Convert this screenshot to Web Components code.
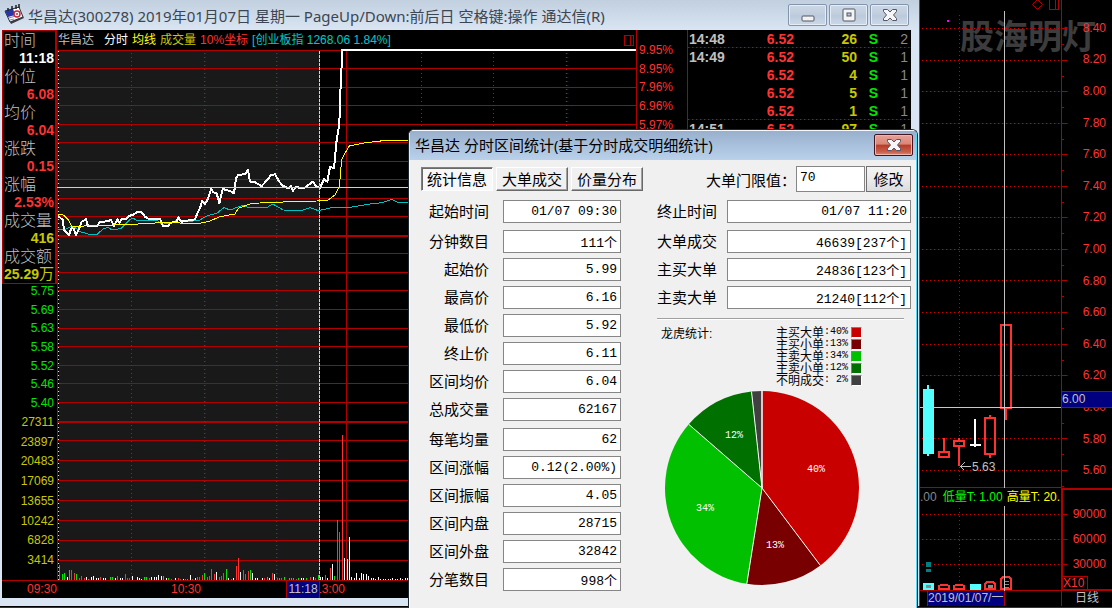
<!DOCTYPE html>
<html lang="zh-CN">
<head>
<meta charset="utf-8">
<title>华昌达 分时走势</title>
<style>
html,body{margin:0;height:100%;background:#000}
body{font-family:"Liberation Sans","Noto Sans CJK SC",sans-serif}
</style>
</head>
<body>
<trade-desk></trade-desk>
<script>
const define = (name, css, html) => {
  customElements.define(name, class extends HTMLElement {
    constructor() {
      super();
      const fill = typeof html === 'function' ? html(this) : html;
      this.attachShadow({mode: 'open'}).innerHTML =
        `<style>*{box-sizing:border-box}:host{display:block;box-sizing:border-box}${css}</style>${fill}`;
    }
  });
};
const RED = '#b00000', HOT = '#ff3232';
const COLORS = {r: '#ff3232', g: '#00e600', w: '#ffffff'};
const hline = (x1, x2, y, extra = '') => `<path d="M${x1} ${y}.5H${x2}" ${extra}/>`;
const vline = (x, y1, y2, extra = '') => `<path d="M${x}.5 ${y1}V${y2}" ${extra}/>`;

/* ---- window caption buttons ---- */
define('caption-button', `
:host{width:39px;height:22px}
button{display:grid;place-items:center;width:100%;height:100%;padding:0;border:1px solid #8494ab;border-radius:2px;
 background:linear-gradient(#ccd8e6,#c0cddd 48%,#bac9db 50%,#cbd8e7);box-shadow:inset 0 0 0 1px #e4ecf5}
:host([kind=danger]) button{border-color:#431422;background:linear-gradient(#e6a298,#d98676 46%,#b83b26 50%,#c9604d 85%,#dc8c7a);box-shadow:inset 0 0 0 1px #eeb6aa}
svg{display:block}`, el => {
  const g = {
    min: ['最小化', '<rect x="1" y="8" width="12" height="5" rx="1" fill="#f2f2f2" stroke="#535666"/>'],
    max: ['最大化', '<rect x="1" y="1" width="12" height="12" rx="1" fill="#f4f4f4" stroke="#535666"/><rect x="5" y="5" width="4" height="3" fill="#b9c8da" stroke="#535666"/>'],
    close: ['关闭', '<path d="M.500 1.500H4.500L7 4 9.500 1.500H13.500V3.500L10.500 7 13.500 10.500V12.500H9.500L7 10 4.500 12.500H.500V10.500L3.500 7 .500 3.500Z" fill="#f6f6f6" stroke="#535666"/>']
  }[el.getAttribute('glyph')];
  return `<button type="button" aria-label="${g[0]}"><svg width="14" height="14">${g[1]}</svg></button>`;
});

/* ---- cursor readout at the left edge ---- */
const READ = [['时间','11:18','w'],['价位','6.08','r'],['均价','6.04','r'],['涨跌','0.15','r'],['涨幅','2.53%','r'],['成交量','416','y'],['成交额','25.29<span>万</span>','y']];
define('cursor-readout', `
:host{border:1px solid ${RED};border-right-width:2px;background:#000}
dl{margin:0}
dt,dd{margin:0;height:18px;line-height:18px;white-space:nowrap}
dt{font-size:16px;line-height:16px;color:#c0c0c0;font-family:"Noto Sans CJK SC",sans-serif;font-weight:300;padding-left:1px}
dd{font-size:14px;font-weight:700;text-align:right;padding-right:1px}
dd span{font-size:15px;font-weight:400}
.w{color:#fff}.r{color:${HOT}}.y{color:#c8c800}`,
  `<dl>${READ.map(r => `<dt>${r[0]}</dt><dd class="${r[2]}">${r[1]}</dd>`).join('')}</dl>`);

/* ---- evenly spaced numeric scale ---- */
define('number-scale', `
:host{display:grid;grid-auto-rows:1fr;font-size:12px;line-height:12px;align-items:center}`,
  el => el.getAttribute('values').split(' ').map(v => `<span>${v}</span>`).join(''));

/* ---- intraday plot ---- */
const VOL = `178:352r 187:378g 193:375g 202:387w 208:366g 214:366r 223:375r 229:378g 238:390r 244:384r 253:390r 259:387w 265:393g 274:387w 280:384w 289:390w 295:390w 301:387r 310:390w 316:390w 331:387g 337:387g 346:390w 352:384r 361:390w 367:390w 376:378r 382:390r 388:391r 397:384w 412:387w 418:390w 424:393w 433:387g 439:387g 448:390r 454:388w 463:388w 469:387w 475:381w 484:384w 490:384g 499:390w 505:390g 514:393r 526:390w 535:390r 541:393r 550:393w 556:393r 562:393g 571:381w 577:393r 586:390w 592:387r 598:387r 607:381r 613:375g 622:387r 628:384r 634:363r 643:378r 649:372w 658:387r 664:384r 670:375r 679:363g 685:390w 694:393r 700:390w 709:354r 715:330r 721:372w 730:366r 736:378r 745:369r 751:366g 757:375w 766:390w 772:390w 787:391w 793:390r 802:388g 808:390w 817:375r 823:378w 832:390r 838:391g 844:390r 853:388g 868:390g 874:390g 880:390g 889:393r 895:390g 904:390w 910:390w 919:390g 931:387r 940:387w 946:390r 955:381g 961:387w 967:387w 976:381r 982:390w 991:360r 997:348w 1003:384g 1012:216r 1018:252r 1027:-39r 1033:330w 1042:333w 1048:267w 1054:387w 1063:390w 1069:375w 1078:390w 1084:375w 1090:378w 1099:378w 1105:384w 1114:390w 1120:390w 1126:393w 1135:387w 1141:393w 1150:393w 1156:392w 1165:393w 1171:393w 1177:390w 1186:393w 1192:393w 1201:390w 1207:393w 1216:391w 1222:391w`;
const PRICE = 'M175 228 188 240 192 270 200 278 207 285 215 262 222 268 228 285 235 272 245 245 258 238 264 258 290 258 300 247 325 243 333 240 342 258 352 238 358 248 366 236 378 238 386 228 400 224 410 217 425 217 435 230 445 236 480 236 488 257 505 257 512 248 530 245 535 232 545 245 585 238 592 220 600 205 606 183 615 192 622 180 634 147 640 157 650 160 658 190 668 147 690 153 702 160 708 115 715 105 735 102 744 90 750 125 765 127 785 138 800 122 812 106 825 103 838 125 848 137 865 145 873 138 879 152 890 140 900 145 912 145 922 137 938 125 948 138 960 143 972 118 982 125 990 80 1002 85 1010 0 1018 -48 1020 -120 1027 -270 1908 -270';
const AVG = 'M175 222 190 225 205 240 215 258 235 260 260 257 380 254 450 250 480 248 600 250 630 243 660 230 705 222 715 205 755 190 850 186 950 183 985 180 1005 165 1018 140 1025 60 1032 45 1048 18 1085 10 1150 2 1240 1';
const INDEX = 'M175 268 195 268 215 258 228 265 240 275 265 282 290 284 310 266 325 262 335 270 362 266 390 238 400 235 412 242 470 240 485 253 510 250 535 238 560 246 600 240 620 228 650 220 672 203 690 210 730 195 745 203 800 203 818 192 850 210 900 213 930 203 955 212 1000 202 1050 202 1110 192 1145 188 1175 178 1195 188 1240 188';
define('intraday-plot', `svg{display:block;width:100%;height:100%;overflow:visible}`, () => {
  const ys = [50,68,87,105,124,142,161,179,198,216,253,272,290,309,328,346,365,383,402,440,460,480,500,520,540,560];
  return `<svg viewBox="57 50 579 530" preserveAspectRatio="none" fill="none" shape-rendering="crispEdges" role="img" aria-label="分时走势图">
<rect x="59" y="51" width="260" height="529" fill="#191919"/>
<g stroke="${RED}">${ys.map(y => hline(57, 636, y)).join('')}
<path d="M57 236H636M57 422H636" stroke-width="2"/>${vline(57, 50, 580)}${vline(346, 50, 580)}
<g stroke="#e00000" stroke-dasharray="1 3">${[131,204,276,421,493,566].map(x => vline(x, 53, 580)).join('')}</g></g>
${vline(58, 51, 580, 'stroke="#ffff00" stroke-dasharray="1 3"')}
${VOL.split(/\s+/).map(t => { const [x, r] = t.split(':'); const y = Math.round(448 + parseInt(r) / 3);
  return `<rect x="${Math.floor(x / 3)}" y="${y}" width="1" height="${580 - y}" fill="${COLORS[r.slice(-1)]}"/>`; }).join('')}
<g transform="translate(0 140) scale(.33333333)" stroke-linejoin="round">
<path d="${INDEX}" stroke="#00c0c0" stroke-width="3"/><path d="${PRICE}" stroke="#fff" stroke-width="6"/><path d="${AVG}" stroke="#ffff00" stroke-width="3"/></g>
${hline(57, 636, 187, 'stroke="#d0d0d0"')}
${vline(319, 51, 580, 'stroke="#1c1cc0"')}${vline(319, 51, 580, 'stroke="#d8d8d8" stroke-dasharray="3 1"')}
</svg>`;
});

/* ---- chart header, time axis, tick table ---- */
define('plot-legend', `
:host{display:flex;align-items:center;font-size:12px;line-height:20px;height:20px;white-space:nowrap;color:#c0c0c0;padding:0 2px 0 1px}
span{margin-right:8px}.s{margin-right:4px}.n{margin-right:10px}svg{margin-left:auto}`,
`<span class="n">华昌达</span><span class="s" style="color:#fff">分时</span><span class="s" style="color:#ff0">均线</span><span class="s" style="color:#c8c800">成交量</span><span class="s" style="color:${HOT}">10%坐标</span><span style="color:#00c8c8">[创业板指 1268.06 1.84%]</span>
<svg width="10" height="11" fill="none" stroke="${RED}" shape-rendering="crispEdges"><path d="M.5.5H9.500V10.500H.5ZM6.500.5V10.500"/></svg>`);

define('time-axis', `
:host{display:flex;height:18px;padding-left:25px;border-top:1px solid ${RED};color:${HOT};font-size:12px;line-height:16px;background:#000}
span{width:30px}.b{margin-left:114px}
.cur{margin-left:85px;width:34px;background:#000080;color:#c0c0c0;border:solid ${RED};border-width:0 1px;text-align:center;z-index:1}
.after{margin-left:-5px}`,
`<span>09:30</span><span class="b">10:30</span><span class="cur">11:18</span><span class="after">13:00</span>`);

const TICKS = [['14:48',26,2],['14:49',50,1],['',4,1],['',5,1],['',1,1],['14:51',97,1]];
define('tick-table', `
:host{border-left:1px solid ${RED};font-size:14px;font-weight:700;overflow:hidden}
table{width:100%;border-collapse:collapse;table-layout:fixed}
td{height:18px;padding:0;line-height:17px;text-align:right;white-space:nowrap}
.t{text-align:left;color:#c0c0c0;padding-left:1px;width:49px}.p{color:${HOT};width:57px}.v{color:#c8c800;width:63px}.s{color:#00e600;width:21px}.c{color:#888;font-weight:400;padding-right:3px}
tr.e{background:repeating-linear-gradient(90deg,#d00000 0 1px,transparent 1px 4px) bottom/100% 1px no-repeat}`,
`<table aria-label="分时成交明细"><tbody>${TICKS.map((r, i) => `<tr class="${i === 0 || i === 4 ? 'e' : ''}"><td class="t">${r[0]}</td><td class="p">6.52</td><td class="v">${r[1]}</td><td class="s">S</td><td class="c">${r[2]}</td></tr>`).join('')}</tbody></table>`);

/* ---- intraday window ---- */
define('intraday-window', `
:host{display:flex;flex-direction:column;min-width:0;background:#d9e5f2;border-right:1px solid #48525c;padding:0 8px 8px 2px}
header{display:flex;align-items:center;height:30px;flex:none;margin:0 -8px 0 -2px;padding:0 10px 0 4px;background:linear-gradient(#c1cfdf,#d9e5f2)}
h1{flex:1;min-width:0;margin:0 0 0 2px;font:400 15px/30px "Noto Sans","Noto Sans CJK SC",sans-serif;color:#3c4652;white-space:nowrap;overflow:hidden;padding-top:2px}
nav{display:flex;gap:2px}
main{flex:1;display:grid;grid-template-columns:55px minmax(0,1fr) 51px 224px;background:#000;min-height:0}
.left,.mid,.pct{display:flex;flex-direction:column;min-height:0}
.left{position:relative}
cursor-readout{height:254px;flex:none}
.sc{padding-right:3px;text-align:right}
.price{flex:131;color:#00e600;margin-top:-2px}.vol{flex:159;color:#c8c800;margin-bottom:10px}
intraday-plot{flex:1;min-height:0}
.pct{border-left:1px solid ${RED};padding-top:11px}
.pct number-scale{height:93px;color:${HOT};padding-left:2px}
time-axis{grid-column:1/-1}
main{grid-template-rows:minmax(0,1fr) 18px}`,
`<header><svg width="22" height="22" viewBox="0 0 22 22"><path d="M1 8 14 3 20 14 7 20Z" fill="#3b3b48"/><path d="M1 7 15 3 19 13 6 18Z" fill="#fff" stroke="#30303c"/><path d="M1 7 9 4.500 11 11 4 13Z" fill="#2636a8"/><path d="M4 4V7M8 2V6M12 1V5M15 0V4" stroke="#222" stroke-width="1.500"/><path d="M5 14 10 12.500M6 16 10 15" stroke="#7c86c0"/><circle cx="13" cy="10" r="3" fill="#fff" stroke="#c22a3c" stroke-width="1.500"/><circle cx="13" cy="10" r="1" fill="#c22a3c"/></svg>
<h1>华昌达(300278) 2019年01月07日 星期一 PageUp/Down:前后日 空格键:操作 通达信(R)</h1>
<nav><caption-button glyph="min"></caption-button><caption-button glyph="max"></caption-button><caption-button glyph="close"></caption-button></nav></header>
<main><div class="left"><cursor-readout></cursor-readout>
<number-scale class="sc price" values="5.75 5.69 5.63 5.58 5.52 5.46 5.40"></number-scale>
<number-scale class="sc vol" values="27311 23897 20483 17069 13655 10242 6828 3414"></number-scale></div>
<div class="mid"><plot-legend></plot-legend><intraday-plot></intraday-plot></div>
<div class="pct"><number-scale values="9.95% 8.95% 7.96% 6.96% 5.97%"></number-scale></div>
<tick-table></tick-table><time-axis></time-axis></main>`);

/* ---- daily candles ---- */
const KY = [28,60,91,123,154,186,217,249,280,312,344,375,407,438,470];
define('candle-plot', `svg{display:block;width:100%;height:100%}text{font-size:12px;fill:#c0c0c0}.wm{font:700 34px "Noto Sans CJK SC",sans-serif;fill:#3c3c3c}`,
`<svg viewBox="920 0 147 488" preserveAspectRatio="none" fill="none" shape-rendering="crispEdges" role="img" aria-label="日线图" overflow="visible">
<text class="wm" x="960" y="49">股海明灯</text>
<g stroke="${RED}"><g stroke="#d00000" stroke-dasharray="1 3">${KY.map(y => hline(922, 1061, y)).join('')}${vline(959, 15, 480)}</g>
${vline(1061, 0, 488)}${KY.map(y => hline(1062, 1067, y) + hline(1062, 1064, y + 16)).join('')}${hline(920, 1061, 487)}
<path d="M1037.500-.5 1042.500 4.500 1037.500 9.500 1032.500 4.500Z" shape-rendering="auto"/><path d="M1049.500-1V9.500H1058.500V-1M1055.500-1V9.500"/></g>
<rect x="947" y="20" width="2" height="2" fill="#ff00ff"/>
<path d="M923 389H934V454H923ZM927 385H929V456H927Z" fill="#54ffff"/>
<g stroke="${HOT}" stroke-width="2"><path d="M939 452H949V457H939ZM944 438V451M954 441H964V446H954ZM959 438V440M959 447V466M985 418H995V454H985ZM990 415V417M990 455V458M1001 325H1011V408H1001ZM1006 409V420"/></g>
<path d="M975 419V447M970 445H981" stroke="#fff" stroke-width="2"/>
${vline(1004, 11, 488, 'stroke="#c0c0c0"')}${hline(920, 1061, 407, 'stroke="#b8d0d0"')}
<path d="M960.500 466.500H971M964.500 462.500 960.500 466.500 964.500 470.500" stroke="#c0c0c0"/><text x="972" y="471">5.63</text></svg>`);

define('volume-plot', `:host{position:relative}svg{display:block;width:100%;height:100%}
p{position:absolute;left:0;top:0;margin:0;font-size:12px;line-height:18px;white-space:nowrap;color:#888;background:#000;width:141px;overflow:hidden}
.g{color:#00ff00;margin-left:6px}.y{color:#ff0;margin-left:4px}`,
`<svg viewBox="920 488 147 103" preserveAspectRatio="none" fill="none" shape-rendering="crispEdges" role="img" aria-label="成交量">
<g stroke="${RED}"><g stroke="#d00000" stroke-dasharray="1 3">${[514,539,564].map(y => hline(922, 1061, y)).join('')}${vline(959, 508, 584)}</g>${vline(1061, 488, 591)}${hline(1062, 1067, 514)}${hline(1062, 1067, 539)}${hline(1062, 1067, 564)}${hline(920, 1061, 590)}</g>
<path d="M926 562H931V567H926ZM926 569H931V572H926Z" fill="#008080"/>
<path d="M923 583H934V590H923ZM970 584H981V590H970Z" fill="#54ffff"/><path d="M926 585H931V588H926ZM988 585H993V588H988Z" fill="#888"/>
<path d="M939 589V586L941 585H947L949 586V589ZM954 589V586L956 585H962L964 586V589ZM985 589V584L987 582H993L995 584V589ZM1001 589V579L1003 577H1009L1011 579V589Z" stroke="${HOT}" stroke-width="2"/>
<path d="M1004 581.500H1009M1004 584.500H1009M1004 587.500H1009" stroke="#888"/>${vline(1004, 504, 591, 'stroke="#c0c0c0"')}</svg>
<p>.00<span class="g">低量T: 1.00</span><span class="y">高量T: 20.</span></p>`);

define('daily-panel', `
:host{display:grid;grid-template-columns:141px 51px;grid-template-rows:minmax(0,488fr) minmax(0,103fr) 15px;background:#000;color:${HOT};font-size:12px;line-height:14px}
candle-plot,volume-plot{min-height:0;width:147px}
.axis{position:relative;display:flex;flex-direction:column;padding:12px 6px 2px 0;text-align:right;min-height:0}
.axis number-scale{flex:1}
.mark{position:absolute;left:1px;right:0;top:391px;height:17px;background:#000080;color:#c0c0c0;border:solid ${RED};border-width:1px 0;text-align:left}
.vax{display:flex;flex-direction:column;justify-content:space-between;border:2px solid ${RED};border-right:0;text-align:right;padding-top:11px}
.vax number-scale{height:77px;padding-right:6px}
.x{align-self:flex-start;border:solid ${RED};border-width:1px 1px 0 0;width:25px;height:13px;line-height:13px;text-align:left;color:${HOT}}
.date{display:flex;padding-left:7px}.date b{font-weight:400;width:78px;background:#000080;color:#c0c0c0;border:solid ${RED};border-width:0 1px;overflow:hidden;white-space:nowrap}
.per{color:#c0c0c0;border-left:1px solid ${RED};text-align:center}`,
`<candle-plot></candle-plot><div class="axis"><number-scale values="8.40 8.20 8.00 7.80 7.60 7.40 7.20 7.00 6.80 6.60 6.40 6.20 6.00 5.80 5.60"></number-scale><span class="mark">6.00</span></div>
<volume-plot></volume-plot><div class="vax"><number-scale values="90000 60000 30000"></number-scale><span class="x">X10</span></div>
<div class="date"><b>2019/01/07/一</b></div><div class="per">日线</div>`);

/* ---- statistics dialog ---- */
define('stat-field', `
:host{display:grid;grid-template-columns:var(--label,69px) minmax(0,1fr);column-gap:var(--gap,14px);align-items:center;height:28px}
label{text-align:right;font-size:15px;line-height:23px;white-space:nowrap}
input{width:100%;height:23px;padding:0 3px;border:1px solid #868686;border-radius:0;background:#fff;color:#000;text-align:right;font:13px "Liberation Mono","Noto Sans CJK SC",monospace;outline:0}`,
  el => `<label for="v">${el.getAttribute('label')}</label><input id="v" type="text" readonly value="${el.getAttribute('value')}">`);

const LEG = [['主买大单','40%','#c80000'],['主买小单','13%','#780000'],['主卖大单','34%','#00c000'],['主卖小单','12%','#007000'],['不明成交','2%','#404040']];
define('share-pie', `
:host{display:block}
.top{display:flex;font-size:12px;line-height:12px}
h3{margin:2px 0 0 4px;font-size:12px;font-weight:400;line-height:16px;width:115px}
ul{list-style:none;margin:2px 0 0;padding:0}li{display:flex;height:12px;justify-content:flex-end;align-items:center;white-space:nowrap;width:86px}
li span{width:24px;text-align:right;font:10px/12px "Liberation Mono",monospace}li span.l{width:48px;font:12px/12px "Noto Sans CJK SC",sans-serif}
i{width:11px;height:11px;margin-left:3px;border:1px solid #808080;border-right-color:#fff;border-bottom-color:#fff}
svg{display:block;margin:4px 0 0 7px}text{font:10px "Liberation Mono",monospace;fill:#fff}`, () => {
  const cut = [0, 143, 189, 311, 353.8, 360], at = a => [98 + 97 * Math.sin(a * Math.PI / 180), 98 - 97 * Math.cos(a * Math.PI / 180)].join(' ');
  return `<div class="top"><h3>龙虎统计:</h3><ul>${LEG.map(l => `<li><span class="l">${l[0]}</span><span>:${l[1].padStart(3, '\u00a0')}</span><i style="background:${l[2]}"></i></li>`).join('')}</ul></div>
<svg width="196" height="196" role="img" aria-label="龙虎统计饼图">${LEG.map((l, i) => `<path d="M98 98L${at(cut[i])}A97 97 0 0 1 ${at(cut[i + 1])}Z" fill="${l[2]}"/>`).join('')}
<path d="${cut.map(a => 'M98 98L' + at(a)).join('')}" stroke="#fff"/>
<text x="143" y="82">40%</text><text x="102" y="158">13%</text><text x="32" y="121">34%</text><text x="61" y="48">12%</text></svg>`;
});

const A = [['起始时间','01/07 09:30'],['分钟数目','111个'],['起始价','5.99'],['最高价','6.16'],['最低价','5.92'],['终止价','6.11'],['区间均价','6.04'],['总成交量','62167'],['每笔均量','62'],['区间涨幅','0.12(2.00%)'],['区间振幅','4.05'],['区间内盘','28715'],['区间外盘','32842'],['分笔数目','998个']];
const B = [['终止时间','01/07 11:20'],['大单成交','46639[237个]'],['主买大单','24836[123个]'],['主卖大单','21240[112个]']];
const field = f => `<stat-field label="${f[0]}" value="${f[1]}"></stat-field>`;
define('stats-dialog', `
:host{display:flex;flex-direction:column;border:solid #1c2630;border-width:1px 1px 0;border-radius:6px 6px 0 0;background:#f0f0f0;overflow:hidden;color:#000}
header{display:flex;align-items:center;height:30px;flex:none;padding:0 4px 2px 5px;background:linear-gradient(#98b0cd,#b9d1ea);border-top:1px solid #f4f8fc;border-left:1px solid #dce8f4;box-shadow:inset -1px 0 #4fd8f4}
h2{flex:1;margin:0;font:400 15px/28px "Open Sans","Noto Sans CJK SC",sans-serif;white-space:nowrap}
.body{flex:1;display:grid;grid-template-columns:213px minmax(0,1fr);column-gap:24px;align-content:start;padding:3px 6px 0 10px;border-left:1px solid #fff;box-shadow:inset -1px 0 #4fd8f4}
.bar{grid-column:1/-1;display:flex;align-items:center;height:34px;padding:0 0 2px 1px}
.tabs{display:flex;gap:3px;flex:1}
.tabs button{width:72px;height:24px;padding:0;border:1px solid;border-color:#fff #696969 #696969 #fff;box-shadow:inset -1px -1px #a0a0a0;background:#f0f0f0;font:15px/20px "Noto Sans CJK SC",sans-serif;color:#000}
.tabs button[aria-selected=true]{border-color:#808080 #fff #fff #808080;box-shadow:inset 1px 1px #696969;background:#f8f8f8}
.limit{display:flex;align-items:center;font-size:15px}
.limit label{width:90px}
.limit input{width:69px;height:26px;border:1px solid #868686;padding:0 3px 3px;font:13px "Liberation Mono",monospace;background:#fff}
.limit button{width:45px;height:26px;margin-left:1px;padding:0;border:1px solid #707070;background:linear-gradient(#f4f4f4,#ebebeb 50%,#dcdcdc);font:15px/20px "Noto Sans CJK SC",sans-serif;color:#000}
.a{padding-right:12px}.a .g,.b .g{padding-bottom:2px}
.b{--label:60px;--gap:10px}
hr{margin:7px 7px 4px 0;border:0;border-top:1px solid #a0a0a0;border-bottom:1px solid #fff}`,
`<header><h2>华昌达 分时区间统计(基于分时成交明细统计)</h2><caption-button glyph="close" kind="danger"></caption-button></header>
<div class="body"><div class="bar"><div class="tabs" role="tablist"><button role="tab" aria-selected="true">统计信息</button><button role="tab" aria-selected="false">大单成交</button><button role="tab" aria-selected="false">价量分布</button></div>
<div class="limit"><label for="lim">大单门限值：</label><input id="lim" type="text" value="70"><button type="button">修改</button></div></div>
<div class="a"><div class="g">${field(A[0])}</div><div class="g">${A.slice(1, 8).map(field).join('')}</div><div>${A.slice(8).map(field).join('')}</div></div>
<div class="b"><div class="g">${field(B[0])}</div><div>${B.slice(1).map(field).join('')}</div><hr><share-pie></share-pie></div></div>`);

/* ---- desktop ---- */
define('trade-desk', `
:host{position:relative;display:grid;grid-template-columns:minmax(0,1fr) 192px;grid-template-rows:minmax(0,1fr);min-height:100vh;height:100%;padding-bottom:2px;background:linear-gradient(${RED},${RED}) bottom/100% 1px no-repeat #000;overflow:hidden}
stats-dialog{position:absolute;right:194px;top:129px;bottom:0;width:510px}`,
`<intraday-window></intraday-window><daily-panel></daily-panel><stats-dialog></stats-dialog>`);
</script>
</body>
</html>
